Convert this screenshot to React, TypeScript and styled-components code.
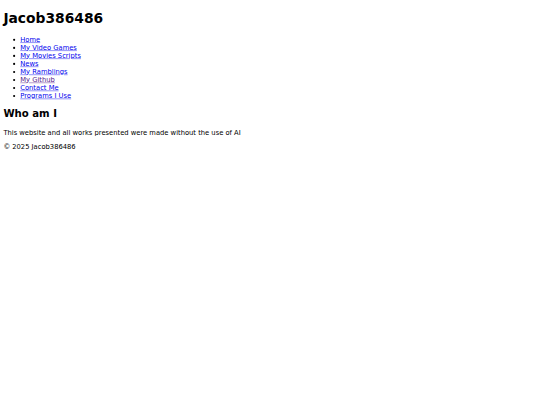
import React from "react";
import styled, { createGlobalStyle } from "styled-components";

const GlobalStyle = createGlobalStyle`
  html, body {
    margin: 0;
    padding: 0;
    overflow: hidden;
    background: #fff;
  }
`;

const Page = styled.div`
  width: 1264px;
  padding: 3px 8px 8px;
  font-family: "DejaVu Sans", sans-serif;
  font-size: 16px;
  color: #000;
  transform: scale(0.421875);
  transform-origin: 0 0;
  display: flow-root;
`;

const Title = styled.h1`
  font-size: 2.05em;
  font-weight: bold;
  margin: 0.67em 0;
`;

const NavList = styled.ul`
  list-style: disc;
  margin: 1em 0;
  padding-left: 40px;
`;

const NavItem = styled.li`
  display: list-item;
`;

const NavLink = styled.a<{ $visited?: boolean }>`
  color: ${(p) => (p.$visited ? "#551a8b" : "#0000ee")};
  text-decoration: underline;
  cursor: pointer;
`;

const Heading = styled.h2`
  font-size: 1.5em;
  font-weight: bold;
  margin: 0.8em 0 0.83em;
`;

const Paragraph = styled.p`
  margin: 1em 0;
`;

const Footer = styled.footer`
  margin: 1em 0;
`;

const links = [
  { label: "Home" },
  { label: "My Video Games" },
  { label: "My Movies Scripts" },
  { label: "News" },
  { label: "My Ramblings" },
  { label: "My Github", visited: true },
  { label: "Contact Me" },
  { label: "Programs I Use" },
];

export default function App() {
  return (
    <>
      <GlobalStyle />
      <Page>
        <header>
          <Title>Jacob386486</Title>
          <nav>
            <NavList>
              {links.map((l) => (
                <NavItem key={l.label}>
                  <NavLink $visited={l.visited}>{l.label}</NavLink>
                </NavItem>
              ))}
            </NavList>
          </nav>
        </header>
        <main>
          <Heading>Who am I</Heading>
          <Paragraph>
            This website and all works presented were made without the use of AI
          </Paragraph>
        </main>
        <Footer>© 2025 Jacob386486</Footer>
      </Page>
    </>
  );
}
